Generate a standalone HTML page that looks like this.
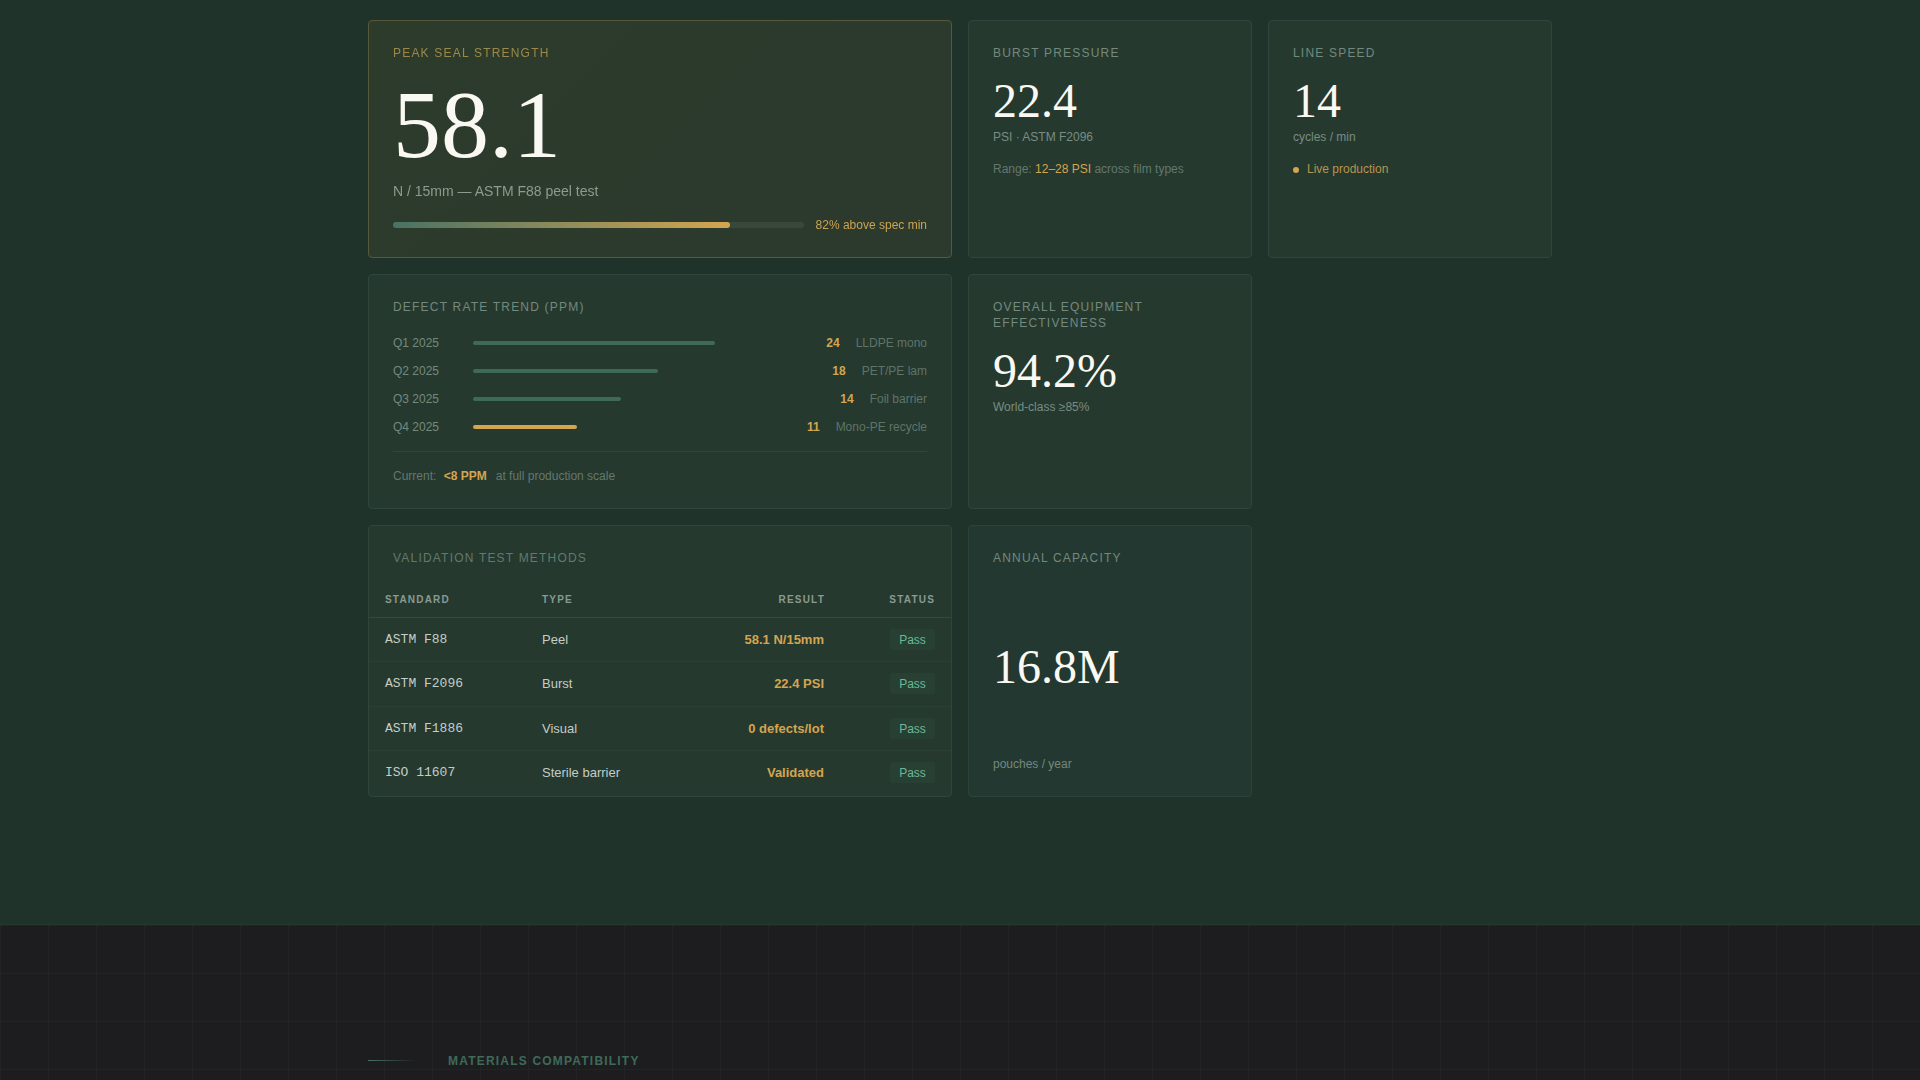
<!DOCTYPE html>
<html lang="en">
<head>
<meta charset="utf-8">
<title>Seal Performance Dashboard</title>
<style>
*{box-sizing:border-box;margin:0;padding:0}
html,body{width:1920px;height:1080px;overflow:hidden;background:#20332a;}
body{font-family:"Liberation Sans",sans-serif;color:#f5f3ec;position:relative;-webkit-font-smoothing:antialiased}
.sec1{position:absolute;left:0;top:0;width:1920px;height:925px;background:#20332a}
.sec2{position:absolute;left:0;top:925px;width:1920px;height:155px;background-color:#1d1d1f;
 background-image:linear-gradient(to right,rgba(255,255,255,.028) 1px,transparent 1px),linear-gradient(to bottom,rgba(255,255,255,.028) 1px,transparent 1px);
 background-size:48px 48px;}
.card{position:absolute;background:#25392f;border:1px solid #2e463b;border-radius:4px;}
.lbl{position:absolute;left:24px;top:25px;font-size:12px;line-height:14px;letter-spacing:1.2px;color:#73897d;text-transform:uppercase;white-space:nowrap}
.serif{font-family:"Liberation Serif",serif;color:#faf8f2;position:absolute;left:24px;white-space:nowrap}
.sub{position:absolute;left:24px;font-size:12px;line-height:14px;color:#788d83;white-space:nowrap}
.gold{color:#d4a550}
/* card 1 */
#c1{will-change:transform;left:368px;top:20px;width:584px;height:238px;border-color:#56593a;background:linear-gradient(135deg,#2d3b2b 0%,#2b3a2d 100%)}
#c1 .lbl{color:#9c894a}
#c1 .big{font-size:96px;line-height:96px;top:56px;letter-spacing:0}
#c1 .unit{position:absolute;left:24px;top:162px;font-size:14px;line-height:16px;color:#8c9b90;white-space:nowrap}
#c1 .track{position:absolute;left:24px;top:201px;width:411px;height:6px;border-radius:3px;background:rgba(255,255,255,.07)}
#c1 .fill{position:absolute;left:0;top:0;height:6px;width:337px;border-radius:3px;background:linear-gradient(90deg,#4a7264 0%,#d4a550 100%)}
#c1 .pct{position:absolute;right:24px;top:197px;font-size:12px;line-height:14px;color:#cba354;white-space:nowrap}
/* card 2, 3 */
#c2{left:968px;top:20px;width:284px;height:238px}
#c3{left:1268px;top:20px;width:284px;height:238px}
.mid{font-size:48px;line-height:48px;top:56px}
/* card 4 trend */
#c4{left:368px;top:274px;width:584px;height:235px}
.row{position:absolute;left:24px;right:24px;height:14px;font-size:12px;line-height:14px;color:#74897e}
.row .q{position:absolute;left:0;top:0}
.row .bar{position:absolute;left:80px;top:5px;height:4px;border-radius:2px;background:#3f6a58}
.row .r{position:absolute;right:0;top:0;white-space:nowrap;color:#5f7468}
.row .r b{color:#d4a550;font-weight:bold;margin-right:16px}
#c4 .hr{position:absolute;left:24px;right:24px;top:176px;height:1px;background:#30453a}
#c4 .cur{position:absolute;left:24px;top:194px;font-size:12px;line-height:14px;color:#63786d;white-space:nowrap}
#c4 .cur b{color:#d4a550;margin:0 9px 0 4px}
/* card 5 OEE */
#c5{left:968px;top:274px;width:284px;height:235px}
#c5 .lbl{white-space:normal;width:236px;line-height:16px;top:24px}
/* card 6 table */
#c6{left:368px;top:525px;width:584px;height:272px}
#c6 .lbl{color:#63796d}
.th{position:absolute;top:68px;font-size:10px;line-height:12px;font-weight:bold;letter-spacing:1.2px;color:#8a9a91;white-space:nowrap}
.tr{position:absolute;left:0;right:0;height:44px;border-top:1px solid #2a4035}
.tr.first{border-top-color:#334c40}
.tr>span{position:absolute;white-space:nowrap}
.tr .s{left:16px;top:14px;font-family:"Liberation Mono",monospace;font-size:13px;line-height:15px;color:#c4cdc6}
.tr .t{left:173px;top:14px;font-size:13px;line-height:15px;color:#c4cdc6}
.tr .v{right:127px;top:14px;font-size:13px;line-height:15px;font-weight:bold;color:#d4a550}
.tr .p{right:16px;top:11px;width:45px;height:21px;border-radius:2px;background:#283f34;color:#6cb996;font-size:12px;line-height:23px;text-align:center}
/* card 7 */
#c7{left:968px;top:525px;width:284px;height:272px;background:#233830;border-color:#2b4339}
/* heading */
.hline{position:absolute;left:368px;top:1060px;width:48px;height:1px;background:linear-gradient(90deg,#4a7264,rgba(74,114,100,0))}
.hd{position:absolute;left:448px;top:1054px;font-size:12px;line-height:14px;font-weight:bold;letter-spacing:1.2px;color:#3f6a5a;white-space:nowrap}
</style>
</head>
<body>
<div class="sec1"></div>
<div class="sec2"></div>
<div style="position:absolute;left:0;top:924px;width:1920px;height:1px;background:#25392f"></div>

<div class="card" id="c1">
  <div class="lbl">Peak Seal Strength</div>
  <div class="serif big">58.1</div>
  <div class="unit">N / 15mm — ASTM F88 peel test</div>
  <div class="track"><div class="fill"></div></div>
  <div class="pct">82% above spec min</div>
</div>

<div class="card" id="c2">
  <div class="lbl">Burst Pressure</div>
  <div class="serif mid">22.4</div>
  <div class="sub" style="top:109px">PSI · ASTM F2096</div>
  <div class="sub" style="top:141px;color:#63786d">Range: <span class="gold">12–28 PSI</span> across film types</div>
</div>

<div class="card" id="c3">
  <div class="lbl">Line Speed</div>
  <div class="serif mid">14</div>
  <div class="sub" style="top:109px">cycles / min</div>
  <div class="sub gold" style="top:141px;left:38px;color:#b8954e">Live production</div>
  <div style="position:absolute;left:24px;top:146px;width:6px;height:6px;border-radius:50%;background:#d4a550"></div>
</div>

<div class="card" id="c4">
  <div class="lbl">Defect Rate Trend (PPM)</div>
  <div class="row" style="top:61px"><span class="q">Q1 2025</span><span class="bar" style="width:242px"></span><span class="r"><b>24</b>LLDPE mono</span></div>
  <div class="row" style="top:89px"><span class="q">Q2 2025</span><span class="bar" style="width:185px"></span><span class="r"><b>18</b>PET/PE lam</span></div>
  <div class="row" style="top:117px"><span class="q">Q3 2025</span><span class="bar" style="width:148px"></span><span class="r"><b>14</b>Foil barrier</span></div>
  <div class="row" style="top:145px"><span class="q">Q4 2025</span><span class="bar" style="width:104px;background:#d4a550"></span><span class="r"><b>11</b>Mono-PE recycle</span></div>
  <div class="hr"></div>
  <div class="cur">Current: <b>&lt;8 PPM</b>at full production scale</div>
</div>

<div class="card" id="c5">
  <div class="lbl">Overall Equipment Effectiveness</div>
  <div class="serif mid" style="top:72px">94.2%</div>
  <div class="sub" style="top:125px">World-class ≥85%</div>
</div>

<div class="card" id="c6">
  <div class="lbl">Validation Test Methods</div>
  <div class="th" style="left:16px">STANDARD</div>
  <div class="th" style="left:173px">TYPE</div>
  <div class="th" style="right:126px">RESULT</div>
  <div class="th" style="right:16px">STATUS</div>
  <div class="tr first" style="top:91px"><span class="s">ASTM F88</span><span class="t">Peel</span><span class="v">58.1 N/15mm</span><span class="p">Pass</span></div>
  <div class="tr" style="top:135px"><span class="s">ASTM F2096</span><span class="t">Burst</span><span class="v">22.4 PSI</span><span class="p">Pass</span></div>
  <div class="tr" style="top:180px"><span class="s">ASTM F1886</span><span class="t">Visual</span><span class="v">0 defects/lot</span><span class="p">Pass</span></div>
  <div class="tr" style="top:224px"><span class="s">ISO 11607</span><span class="t">Sterile barrier</span><span class="v">Validated</span><span class="p">Pass</span></div>
</div>

<div class="card" id="c7">
  <div class="lbl">Annual Capacity</div>
  <div class="serif mid" style="top:117px">16.8M</div>
  <div class="sub" style="top:231px;color:#74897e">pouches / year</div>
</div>

<div class="hline"></div>
<div class="hd">MATERIALS COMPATIBILITY</div>
</body>
</html>
